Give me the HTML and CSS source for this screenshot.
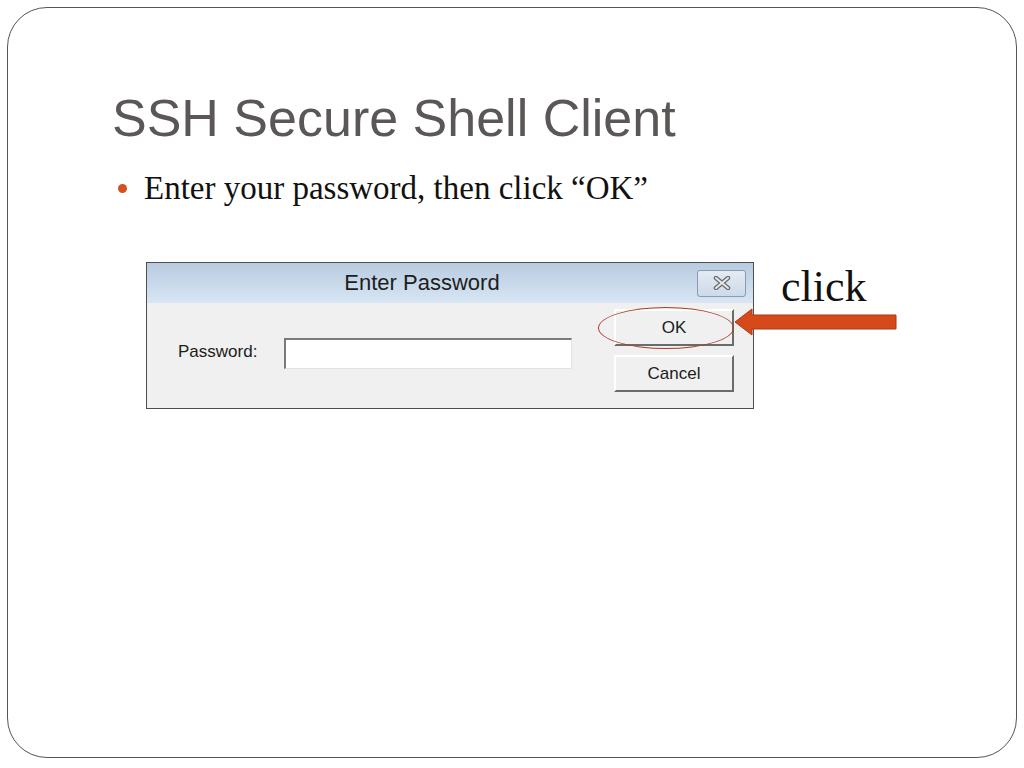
FILE: index.html
```html
<!DOCTYPE html>
<html lang="en">
<head>
  <meta charset="UTF-8" />
  <title>SSH Secure Shell Client</title>
  <link rel="stylesheet" href="styles.css">
</head>
<body>

  <div class="slide">
    <h1>SSH Secure Shell Client</h1>

    <ul class="points">
      <li>Enter your password, then click &ldquo;OK&rdquo;</li>
    </ul>

    <div class="shot-row">
      <div class="shot">
        <div class="dialog">
          <div class="titlebar">
            <div class="title">Enter Password</div>
            <div class="close">
              <svg width="20" height="14" viewBox="0 0 20 14">
                <path d="M4 2 L16 12 M16 2 L4 12" stroke="#6b6b6b" stroke-width="4.5" stroke-linecap="round" fill="none"/>
                <path d="M4 2 L16 12 M16 2 L4 12" stroke="#e4e8ee" stroke-width="2" stroke-linecap="round" fill="none"/>
              </svg>
            </div>
          </div>
          <div class="dialog-body">
            <label class="field-label" for="pw">Password:</label>
            <div class="field" id="pw"></div>
            <div class="buttons">
              <div class="btn">OK</div>
              <div class="btn">Cancel</div>
            </div>
          </div>
        </div>

        <!-- callout drawn over the screenshot -->
        <div class="ring"></div>
        <svg class="arrow" width="164" height="28" viewBox="0 0 164 28">
          <polygon points="1,14 18,1 18,7 162,7 162,21 18,21 18,27" fill="#d5491a" stroke="#a83a12" stroke-width="1"/>
        </svg>
      </div>

      <div class="click">click</div>
    </div>
  </div>

</body>
</html>
```

FILE: styles.css
```css
body {
  margin: 0;
  background: #fff;
}

.slide {
  margin: 7px;
  width: 1008px;
  height: 749px;
  border: 1px solid #555;
  border-radius: 40px;
  box-sizing: content-box;
}

.slide h1 {
  margin: 80px 0 0 104px;
  font-family: "Liberation Sans", Arial, sans-serif;
  font-weight: normal;
  font-size: 52px;
  line-height: 60px;
  color: #5c5757;
}

.points {
  list-style: none;
  margin: 20px 0 0 110px;
  padding: 0;
}

.points li {
  display: flex;
  align-items: center;
  gap: 17px;
  font-family: "Liberation Serif", "Times New Roman", serif;
  font-size: 33px;
  line-height: 40px;
  color: #111;
}

.points li::before {
  content: "";
  width: 9px;
  height: 9px;
  border-radius: 50%;
  background: #d4501e;
}

.shot-row {
  display: flex;
  align-items: flex-start;
  gap: 27px;
  margin: 54px 0 0 138px;
}

.shot {
  position: relative;
}

.dialog {
  width: 606px;
  border: 1px solid #4f4f4f;
  background: #f0f0f0;
  font-family: "Liberation Sans", Arial, sans-serif;
  color: #1c1c1c;
}

.titlebar {
  display: flex;
  align-items: center;
  height: 40px;
  background: linear-gradient(to bottom, #b8cbe0, #d8e6f4);
}

.title {
  flex: 1;
  text-align: center;
  font-size: 22px;
  color: #1e1e1e;
}

.close {
  width: 47px;
  height: 25px;
  margin-right: 7px;
  border: 1px solid #8b9bb0;
  border-radius: 3px;
  background: linear-gradient(to bottom, #e4ebf3, #ccdae8);
  display: flex;
  align-items: center;
  justify-content: center;
}

.dialog-body {
  display: flex;
  align-items: center;
  height: 105px;
  padding: 0 19px 8px 31px;
  box-sizing: border-box;
}

.field-label {
  font-size: 17px;
  width: 106px;
}

.field {
  width: 285px;
  height: 28px;
  background: #fff;
  border-top: 2px solid #7a7a7a;
  border-left: 2px solid #7a7a7a;
  border-right: 1px solid #e2e2e2;
  border-bottom: 1px solid #e2e2e2;
  margin-top: 3px;
}

.buttons {
  align-self: flex-start;
  display: flex;
  flex-direction: column;
  gap: 9px;
  margin-left: auto;
  margin-top: 6px;
}

.btn {
  width: 116px;
  height: 33px;
  display: flex;
  align-items: center;
  justify-content: center;
  font-size: 17px;
  background: #f0f0f0;
  border-top: 2px solid #fff;
  border-left: 2px solid #fff;
  border-right: 2px solid #6b6b6b;
  border-bottom: 2px solid #6b6b6b;
}

.ring {
  position: absolute;
  left: 452px;
  top: 45px;
  width: 134px;
  height: 40px;
  border: 1.5px solid #a8402a;
  border-radius: 50%;
}

.arrow {
  position: absolute;
  left: 588px;
  top: 46px;
}

.click {
  margin-top: 3px;
  font-family: "Liberation Serif", "Times New Roman", serif;
  font-size: 44px;
  line-height: 44px;
  color: #111;
}
```
